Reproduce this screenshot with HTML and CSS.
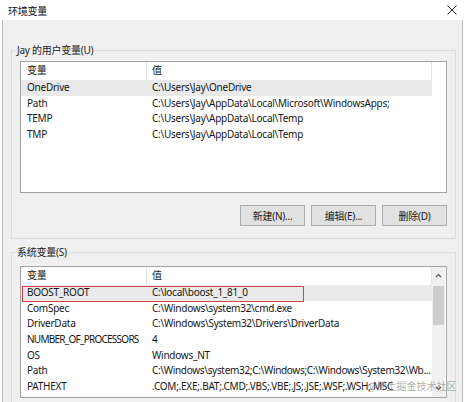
FILE: index.html
```html
<!DOCTYPE html>
<html>
<head>
<meta charset="utf-8">
<link rel="stylesheet" href="styles.css">
</head>
<body>
<div class="window">
  <div class="titlebar">
    <span class="title">环境变量</span>
    <svg class="close" width="10" height="10" viewBox="0 0 10 10"><path d="M0.5 0.5 L9.5 9.5 M9.5 0.5 L0.5 9.5" stroke="#222" stroke-width="1" fill="none"/></svg>
  </div>
  <div class="client">
    <div class="group g1">
      <div class="group-label">Jay 的用户变量(U)</div>
      <div class="list">
        <div class="rows">
          <div class="hdr"><div class="c1">变量</div><div class="c2">值</div></div>
          <div class="row sel"><div class="c1">OneDrive</div><div class="c2">C:\Users\Jay\OneDrive</div></div>
          <div class="row"><div class="c1">Path</div><div class="c2">C:\Users\Jay\AppData\Local\Microsoft\WindowsApps;</div></div>
          <div class="row"><div class="c1">TEMP</div><div class="c2">C:\Users\Jay\AppData\Local\Temp</div></div>
          <div class="row"><div class="c1">TMP</div><div class="c2">C:\Users\Jay\AppData\Local\Temp</div></div>
        </div>
        <div class="filler"></div>
      </div>
      <div class="buttons">
        <div class="btn">新建(N)...</div>
        <div class="btn">编辑(E)...</div>
        <div class="btn">删除(D)</div>
      </div>
    </div>
    <div class="group g2">
      <div class="group-label">系统变量(S)</div>
      <div class="list">
        <div class="rows">
          <div class="hdr"><div class="c1">变量</div><div class="c2">值</div></div>
          <div class="row sel"><div class="c1">BOOST_ROOT</div><div class="c2">C:\local\boost_1_81_0</div><div class="mark"></div></div>
          <div class="row"><div class="c1">ComSpec</div><div class="c2">C:\Windows\system32\cmd.exe</div></div>
          <div class="row"><div class="c1">DriverData</div><div class="c2">C:\Windows\System32\Drivers\DriverData</div></div>
          <div class="row"><div class="c1 tight">NUMBER_OF_PROCESSORS</div><div class="c2">4</div></div>
          <div class="row"><div class="c1">OS</div><div class="c2">Windows_NT</div></div>
          <div class="row"><div class="c1">Path</div><div class="c2 snug">C:\Windows\system32;C:\Windows;C:\Windows\System32\Wb...</div></div>
          <div class="row"><div class="c1">PATHEXT</div><div class="c2">.COM;.EXE;.BAT;.CMD;.VBS;.VBE;.JS;.JSE;.WSF;.WSH;.MSC</div></div>
        </div>
        <div class="scrollbar">
          <svg class="arrow" width="13" height="17" viewBox="0 0 13 17"><path d="M4 10 L6.5 7.5 L9 10" stroke="#555" stroke-width="1.2" fill="none"/></svg>
          <div class="thumb"></div>
          <div class="track"></div>
          <svg class="arrow" width="13" height="17" viewBox="0 0 13 17"><path d="M4 7 L6.5 9.5 L9 7" stroke="#555" stroke-width="1.2" fill="none"/></svg>
        </div>
      </div>
    </div>
  </div>
</div>
<div class="watermark">@稀土掘金技术社区</div>
</body>
</html>
```
FILE: styles.css
```css
html, body {
  margin: 0;
  padding: 0;
}
body {
  width: 465px;
  height: 402px;
  overflow: hidden;
  background: #ffffff;
  font-family: "Noto Sans", "Noto Sans CJK SC", sans-serif;
  font-size: 10px;
  letter-spacing: -0.25px;
  color: #161616;
  position: relative;
}
.titlebar {
  height: 20px;
  display: flex;
  align-items: center;
  justify-content: space-between;
  padding: 0 8px 0 8px;
  background: #ffffff;
}
.title {
  font-size: 10px;
  color: #111;
}
.close {
  display: block;
  margin-top: -1px;
}
.client {
  background: #f0f0f0;
  margin: 0 2px;
  border-left: 1px solid #bcbcbc;
  border-right: 1px solid #bcbcbc;
  height: 382px;
  padding: 30px 6px 0 8px;
  box-sizing: border-box;
}
.group {
  position: relative;
  border: 1px solid #dcdcdc;
  padding: 10px 8px 12px 8px;
}
.g2 {
  margin-top: 13px;
  padding-top: 13px;
  padding-bottom: 20px;
}
.group-label {
  position: absolute;
  top: -8px;
  left: 3px;
  padding: 0 2px;
  background: #f0f0f0;
  line-height: 14px;
  color: #222;
}
.list {
  display: flex;
  height: 132px;
  box-sizing: border-box;
  border: 1px solid #a3a3a3;
  background: #ffffff;
  overflow: hidden;
}
.rows {
  width: 411px;
  flex: none;
}
.filler {
  flex: 1;
}
.hdr {
  display: flex;
  height: 18px;
  align-items: center;
}
.hdr .c1, .hdr .c2 {
  height: 18px;
  line-height: 17px;
  border-right: 1px solid #e5e5e5;
  box-sizing: border-box;
}
.row {
  position: relative;
  display: flex;
  height: 15.7px;
  line-height: 15.7px;
  white-space: nowrap;
}
.row.sel {
  background: #e9e9e9;
}
.c1 {
  width: 126px;
  flex: none;
  padding-left: 6px;
  box-sizing: border-box;
  overflow: hidden;
  white-space: nowrap;
}
.c1.tight {
  letter-spacing: -0.75px;
  padding-right: 2px;
}
.c2 {
  flex: 1;
  padding-left: 5px;
  overflow: hidden;
  white-space: nowrap;
}
.c2.snug {
  letter-spacing: -0.32px;
}
.mark {
  position: absolute;
  left: 1px;
  top: 1px;
  width: 282px;
  height: 16px;
  box-sizing: border-box;
  border: 1px solid #d4434b;
}
.buttons {
  display: flex;
  justify-content: flex-end;
  gap: 6px;
  margin-top: 12px;
}
.btn {
  width: 65px;
  height: 21px;
  box-sizing: border-box;
  border: 1px solid #adadad;
  background: #e1e1e1;
  display: flex;
  align-items: center;
  justify-content: center;
  color: #1a1a1a;
}
.scrollbar {
  width: 13px;
  flex: none;
  background: #f0f0f0;
  display: flex;
  flex-direction: column;
}
.arrow {
  display: block;
  flex: none;
}
.thumb {
  height: 39px;
  margin: 2px 1px 0 1px;
  background: #cdcdcd;
  flex: none;
}
.track {
  flex: 1;
}
.watermark {
  position: absolute;
  left: 367px;
  top: 378px;
  font-size: 10px;
  letter-spacing: 0;
  color: rgba(130, 130, 130, 0.65);
  font-family: "Noto Sans CJK SC", sans-serif;
}
```
